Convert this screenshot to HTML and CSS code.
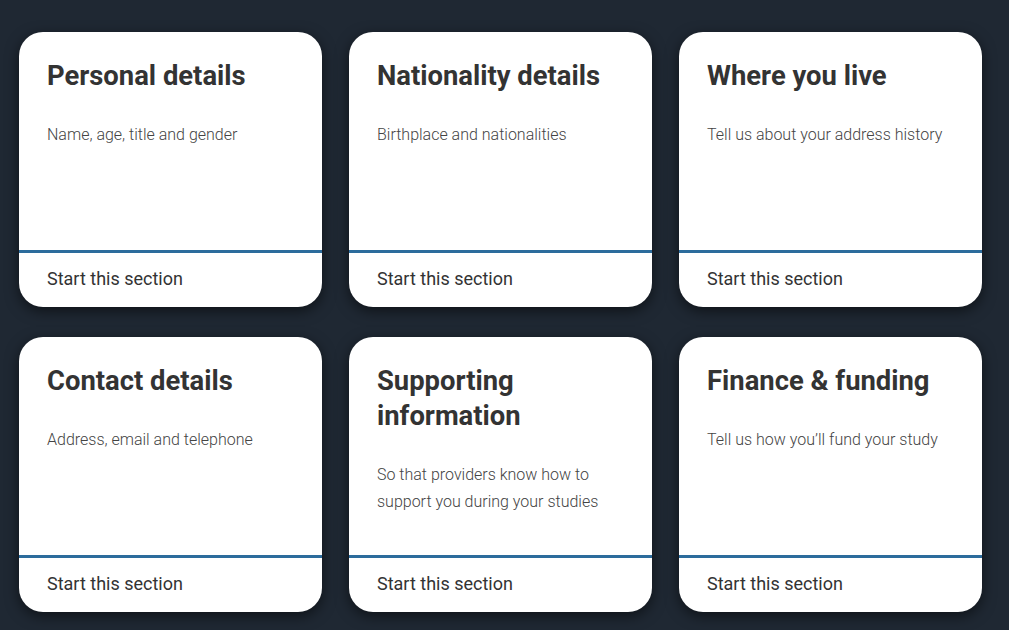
FILE: index.html
```html
<!DOCTYPE html>
<html lang="en">

<head>
    <meta charset="UTF-8">
    <meta name="viewport" content="width=device-width, initial-scale=1.0">
    <title>Your application</title>
    <link rel="stylesheet" href="styles.css">
</head>

<body>
    <div class="sections">
        <div class="card">
            <div class="card-body">
                <h2>Personal details</h2>
                <p>Name, age, title and gender</p>
            </div>
            <a class="card-link" href="#">Start this section</a>
        </div>
        <div class="card">
            <div class="card-body">
                <h2>Nationality details</h2>
                <p>Birthplace and nationalities</p>
            </div>
            <a class="card-link" href="#">Start this section</a>
        </div>
        <div class="card">
            <div class="card-body">
                <h2>Where you live</h2>
                <p>Tell us about your address history</p>
            </div>
            <a class="card-link" href="#">Start this section</a>
        </div>
        <div class="card">
            <div class="card-body">
                <h2>Contact details</h2>
                <p>Address, email and telephone</p>
            </div>
            <a class="card-link" href="#">Start this section</a>
        </div>
        <div class="card">
            <div class="card-body">
                <h2>Supporting information</h2>
                <p>So that providers know how to support you during your studies</p>
            </div>
            <a class="card-link" href="#">Start this section</a>
        </div>
        <div class="card">
            <div class="card-body">
                <h2>Finance &amp; funding</h2>
                <p>Tell us how you’ll fund your study</p>
            </div>
            <a class="card-link" href="#">Start this section</a>
        </div>
    </div>
</body>

</html>
```

FILE: styles.css
```css
body {
    margin: 0;
    font-family: Roboto, "Liberation Sans", Arial, sans-serif;
    background-color: #1f2833;
    min-height: 630px;
}

.sections {
    display: grid;
    grid-template-columns: repeat(3, 303px);
    column-gap: 27px;
    row-gap: 30px;
    padding: 32px 0 0 19px;
}

.card {
    display: flex;
    flex-direction: column;
    height: 275px;
    background: #fff;
    border-radius: 24px;
    overflow: hidden;
    box-shadow: 0 4px 14px rgba(0, 0, 0, 0.55);
}

.card-body {
    flex: 1;
    padding: 27px 28px 0 28px;
    border-bottom: 3px solid #2c6c9c;
}

.card-body h2 {
    margin: 0;
    font-size: 27.4px;
    line-height: 35px;
    font-weight: 700;
    color: #333;
}

.card-body p {
    margin: 26.5px 0 0 0;
    font-size: 16px;
    line-height: 27px;
    font-weight: 300;
    color: #444;
}

.card-link {
    display: block;
    height: 54px;
    line-height: 52px;
    padding: 0 28px;
    font-size: 18px;
    color: #333;
    text-decoration: none;
}
```
